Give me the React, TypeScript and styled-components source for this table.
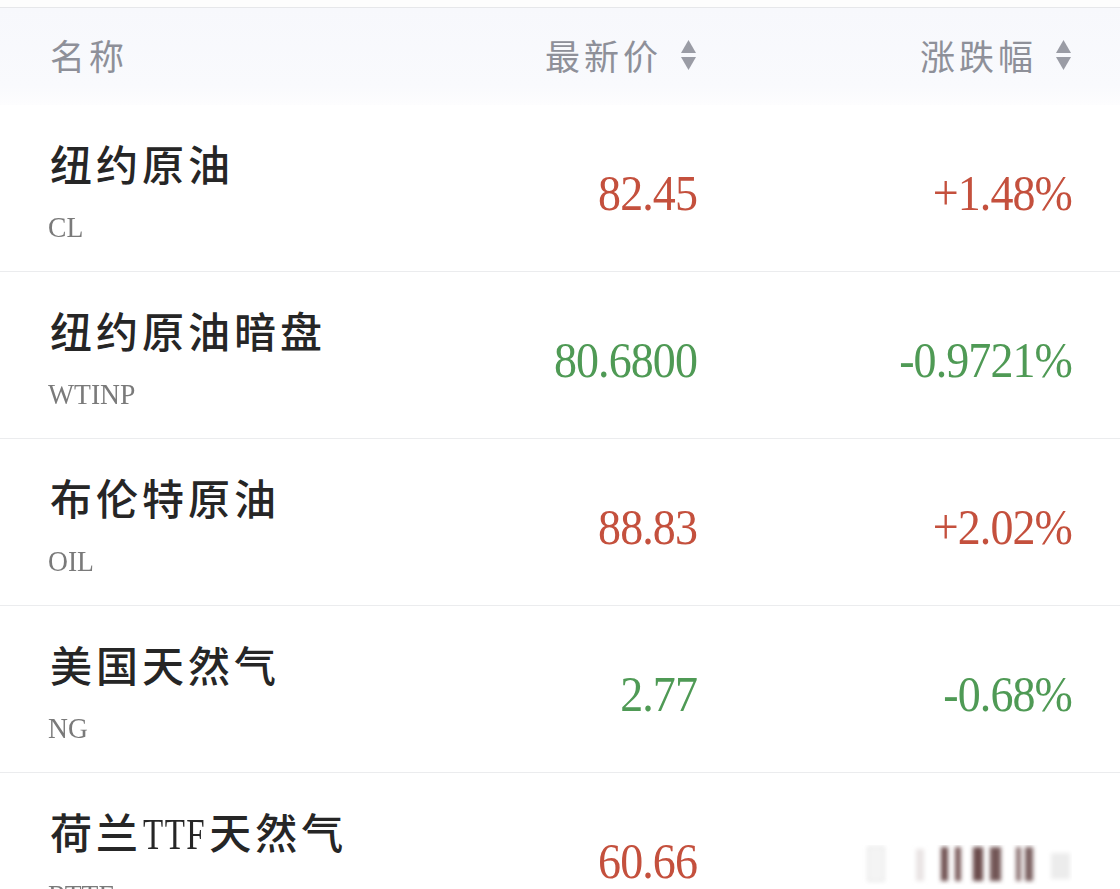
import React from "react";
import styled, { createGlobalStyle } from "styled-components";

const Global = createGlobalStyle`
  html, body { margin: 0; padding: 0; background: #ffffff; }
  body { width: 1120px; height: 889px; overflow: hidden; }
`;

const Page = styled.div`
  width: 1120px;
  height: 889px;
  overflow: hidden;
  background: #ffffff;
  display: flex;
  flex-direction: column;
`;

const TopStrip = styled.div`
  height: 7px;
  background: #fdfdfd;
  border-bottom: 1px solid #e6e7ea;
  flex-shrink: 0;
`;

const Grid = styled.div`
  display: grid;
  grid-template-columns: 1fr 300px 375px;
  padding: 0 48px 0 50px;
  align-items: center;
`;

const HeaderRow = styled(Grid)`
  height: 97px;
  background: linear-gradient(#f7f8fc, #f9fafd 80%, #fdfdfe);
  flex-shrink: 0;
`;

const HeadCell = styled.div<{ $right?: boolean }>`
  display: flex;
  align-items: center;
  justify-content: ${(p) => (p.$right ? "flex-end" : "flex-start")};
  gap: 18px;
  font-family: "Noto Sans CJK SC", "Noto Sans", sans-serif;
  font-size: 35px;
  letter-spacing: 4px;
  color: #8e9099;
  margin-top: -4px;
`;

const Row = styled(Grid)`
  height: 166px;
  border-bottom: 1px solid #ebecee;
  flex-shrink: 0;
`;

const NameCell = styled.div`
  display: flex;
  flex-direction: column;
  gap: 20px;
  margin-top: 10px;
`;

const Name = styled.div`
  font-family: "Liberation Serif", "Noto Sans CJK SC", serif;
  font-weight: 500;
  font-size: 42px;
  line-height: 48px;
  letter-spacing: 4px;
  color: #262626;
  white-space: nowrap;
`;

const Latin = styled.span`
  display: inline-block;
  font-size: 44px;
  letter-spacing: 2px;
  transform: scaleX(0.75);
  transform-origin: left center;
  margin-left: 1px;
  margin-right: -18px;
`;

const Code = styled.div`
  font-family: "Liberation Serif", serif;
  font-size: 30px;
  line-height: 32px;
  color: #7a7a7a;
  margin-left: -2px;
  transform: scaleX(0.92);
  transform-origin: left center;
`;

const Value = styled.div<{ $up: boolean }>`
  font-family: "Liberation Serif", serif;
  font-size: 50px;
  letter-spacing: -1px;
  line-height: 54px;
  text-align: right;
  color: ${(p) => (p.$up ? "#c4503d" : "#4f9a55")};
  margin-top: 10px;
  white-space: nowrap;
  transform: scaleX(0.92);
  transform-origin: right center;
`;

const SortIcon = () => (
  <svg width="17" height="34" viewBox="0 0 17 34" aria-hidden>
    <path d="M8.5 2 L16 15 L1 15 Z" fill="#9a9ca5" />
    <path d="M1 19 L16 19 L8.5 32 Z" fill="#9a9ca5" />
  </svg>
);

const Watermark = styled.svg`
  display: block;
  margin-left: auto;
  margin-top: 18px;
`;

const Mark = () => (
  <Watermark width="210" height="40" viewBox="0 0 210 40" aria-hidden>
    <defs>
      <filter id="b" x="-20%" y="-20%" width="140%" height="140%">
        <feGaussianBlur stdDeviation="2" />
      </filter>
    </defs>
    <g filter="url(#b)">
      <rect x="6" y="2" width="16" height="34" fill="#f4f4f4" stroke="#dcdcdc" />
      <rect x="54" y="4" width="8" height="32" fill="#e9e4e4" />
      <rect x="79" y="2" width="7" height="34" fill="#6e5050" />
      <rect x="93" y="2" width="6" height="34" fill="#7a5c5c" />
      <rect x="111" y="2" width="10" height="34" fill="#6a4c4c" />
      <rect x="128" y="2" width="11" height="34" fill="#735656" />
      <rect x="154" y="2" width="5" height="34" fill="#8a7070" />
      <rect x="163" y="2" width="8" height="34" fill="#7a6060" />
      <rect x="189" y="8" width="19" height="26" fill="#ececec" />
    </g>
  </Watermark>
);

type Item = { name: React.ReactNode; code: string; price: string; change: string; up: boolean; hidden?: boolean };

const items: Item[] = [
  { name: "纽约原油", code: "CL", price: "82.45", change: "+1.48%", up: true },
  { name: "纽约原油暗盘", code: "WTINP", price: "80.6800", change: "-0.9721%", up: false },
  { name: "布伦特原油", code: "OIL", price: "88.83", change: "+2.02%", up: true },
  { name: "美国天然气", code: "NG", price: "2.77", change: "-0.68%", up: false },
  {
    name: (
      <>
        荷兰<Latin>TTF</Latin>天然气
      </>
    ),
    code: "RTTF",
    price: "60.66",
    change: "",
    up: true,
    hidden: true,
  },
];

export default function App() {
  return (
    <Page>
      <Global />
      <TopStrip />
      <HeaderRow>
        <HeadCell>名称</HeadCell>
        <HeadCell $right>
          最新价
          <SortIcon />
        </HeadCell>
        <HeadCell $right>
          涨跌幅
          <SortIcon />
        </HeadCell>
      </HeaderRow>
      {items.map((it) => (
        <Row key={it.code}>
          <NameCell>
            <Name>{it.name}</Name>
            <Code>{it.code}</Code>
          </NameCell>
          <Value $up={it.up}>{it.price}</Value>
          {it.hidden ? <Mark /> : <Value $up={it.up}>{it.change}</Value>}
        </Row>
      ))}
    </Page>
  );
}
